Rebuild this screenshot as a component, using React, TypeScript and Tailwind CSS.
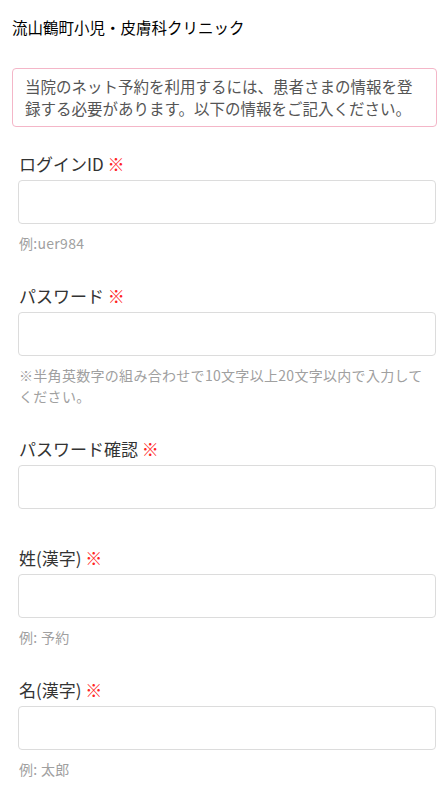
import React from 'react';

interface Field {
  id: string;
  label: string;
  type: string;
  hint?: string;
}

const fields: Field[] = [
  { id: 'login', label: 'ログインID', type: 'text', hint: '例:uer984' },
  {
    id: 'password',
    label: 'パスワード',
    type: 'password',
    hint: '※半角英数字の組み合わせで10文字以上20文字以内で入力してください。',
  },
  { id: 'password_confirm', label: 'パスワード確認', type: 'password' },
  { id: 'last_name', label: '姓(漢字)', type: 'text', hint: '例: 予約' },
  { id: 'first_name', label: '名(漢字)', type: 'text', hint: '例: 太郎' },
];

const App = () => {
  return (
    <div
      className="min-h-screen bg-white"
      style={{ fontFamily: '"Noto Sans CJK JP", "Noto Sans", sans-serif' }}
    >
      <h1 className="pl-[12px] pt-[15px] text-[15.5px] leading-[24px] text-black">
        流山鶴町小児・皮膚科クリニック
      </h1>

      <div className="mt-[29px] ml-[12px] mr-[9px] rounded-[4px] border border-[#f4b6c8] px-[12px] pt-[6px] pb-[7px] text-[15.5px] leading-[22px] text-[#555]">
        当院のネット予約を利用するには、患者さまの情報を登録する必要があります。以下の情報をご記入ください。
      </div>

      <form className="mt-[25px] pl-[18px] pr-[10px]">
        {fields.map((field) => (
          <div key={field.id} className={field.hint ? 'mb-[30px]' : 'mb-[37px]'}>
            <label htmlFor={field.id} className="block pl-[1px] text-[17px] leading-[24px] text-[#333]">
              {field.label} <span className="text-[#f22]">※</span>
            </label>
            <input
              id={field.id}
              type={field.type}
              className="mt-[4px] block h-[44px] w-full rounded-[4px] border border-[#dcdcdc] bg-white px-3 text-[15px] outline-none"
            />
            {field.hint && (
              <p className="mt-[9px] pl-[1px] pr-[6px] text-[14px] leading-[21px] tracking-[0.3px] text-[#a0a0a0]">
                {field.hint}
              </p>
            )}
          </div>
        ))}
      </form>
    </div>
  );
};

export default App;
